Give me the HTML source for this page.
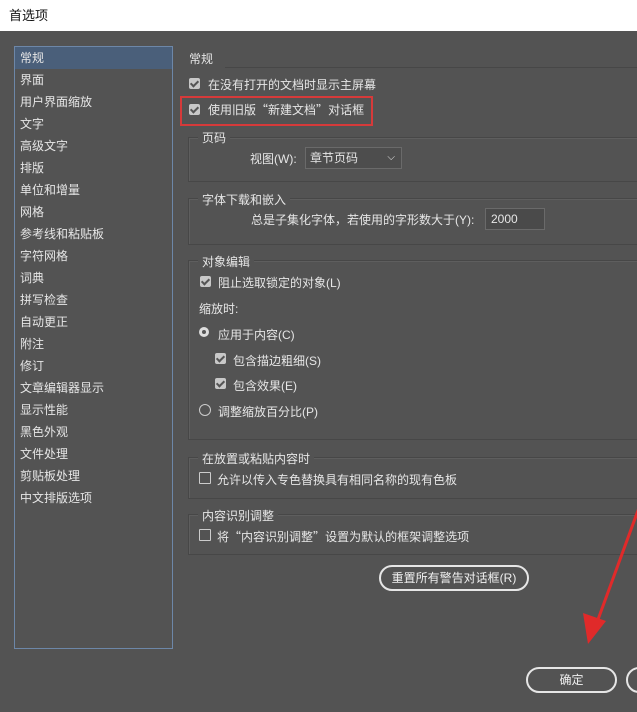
<!DOCTYPE html>
<html><head><meta charset="utf-8"><style>
body{margin:0;width:637px;height:712px;background:#535353;font-family:"Liberation Sans","Noto Sans CJK SC",sans-serif;font-size:12px;color:#e6e6e6;position:relative;overflow:hidden}
.a{position:absolute;white-space:nowrap}
.q{font-family:"Noto Sans CJK SC",sans-serif}
.title{position:absolute;left:0;top:0;width:637px;height:31px;background:#fff;color:#111;font-size:13px;line-height:31px;text-indent:9px}
.side{position:absolute;left:14px;top:46px;width:157px;height:601px;border:1px solid #6d87a8;background:#535353}
.side div{height:22px;line-height:22px;padding-left:5px;color:#e6e6e6}
.side .sel{background:#4a5f7a}
.cb{position:absolute;width:11px;height:11px;background:#c8c8c8;border-radius:2px}
.cb::after{content:"";position:absolute;left:3px;top:1px;width:3px;height:6px;border:solid #555;border-width:0 2px 2px 0;transform:rotate(45deg)}
.ecb{position:absolute;width:10px;height:10px;border:1px solid #ccc;border-radius:1px}
.grp{position:absolute;left:188px;width:460px;border:1px solid #474747;border-right:none;box-shadow:inset 1px 1px 0 #5e5e5e}
.gl{position:absolute;background:#535353;padding:0 4px;color:#e6e6e6}
.btn{position:absolute;border:2px solid #e6e6e6;border-radius:14px;text-align:center;color:#f0f0f0}
</style></head><body>
<div class="title">首选项</div>
<div class="side">
<div class="sel">常规</div><div>界面</div><div>用户界面缩放</div><div>文字</div><div>高级文字</div><div>排版</div><div>单位和增量</div><div>网格</div><div>参考线和粘贴板</div><div>字符网格</div><div>词典</div><div>拼写检查</div><div>自动更正</div><div>附注</div><div>修订</div><div>文章编辑器显示</div><div>显示性能</div><div>黑色外观</div><div>文件处理</div><div>剪贴板处理</div><div>中文排版选项</div>
</div>
<div class="a" style="left:189px;top:50px">常规</div>
<div class="a" style="left:225px;top:67px;width:412px;height:1px;background:#474747"></div>
<div class="cb" style="left:189px;top:78px"></div><div class="a" style="left:208px;top:76px">在没有打开的文档时显示主屏幕</div>
<div class="a" style="left:180px;top:96px;width:189px;height:26px;border:2px solid #d63a3a"></div>
<div class="cb" style="left:189px;top:104px"></div><div class="a" style="left:208px;top:101px">使用旧版<span class="q">“</span>新建文档<span class="q">”</span>对话框</div>

<div class="grp" style="top:137px;height:43px"></div><div class="gl" style="left:198px;top:129px">页码</div>
<div class="a" style="left:250px;top:150px">视图(W):</div>
<div class="a" style="left:305px;top:147px;width:95px;height:20px;border:1px solid #6a6a6a;background:#4d4d4d;line-height:20px;text-indent:4px">章节页码<span style="position:absolute;right:6px;font-size:10px">⌵</span></div>

<div class="grp" style="top:198px;height:45px"></div><div class="gl" style="left:198px;top:191px">字体下载和嵌入</div>
<div class="a" style="left:251px;top:211px">总是子集化字体，若使用的字形数大于(Y):</div>
<div class="a" style="left:485px;top:208px;width:58px;height:20px;border:1px solid #6a6a6a;background:#4a4a4a;line-height:20px;text-indent:5px">2000</div>

<div class="grp" style="top:260px;height:178px"></div><div class="gl" style="left:198px;top:253px">对象编辑</div>
<div class="cb" style="left:200px;top:276px"></div><div class="a" style="left:218px;top:274px">阻止选取锁定的对象(L)</div>
<div class="a" style="left:199px;top:300px">缩放时:</div>
<div class="a" style="left:199px;top:327px;width:10px;height:10px;border-radius:50%;background:#ddd"><div style="position:absolute;left:3px;top:3px;width:4px;height:4px;border-radius:50%;background:#555"></div></div>
<div class="a" style="left:218px;top:326px">应用于内容(C)</div>
<div class="cb" style="left:215px;top:353px"></div><div class="a" style="left:233px;top:352px">包含描边粗细(S)</div>
<div class="cb" style="left:215px;top:378px"></div><div class="a" style="left:233px;top:377px">包含效果(E)</div>
<div class="a" style="left:199px;top:404px;width:10px;height:10px;border-radius:50%;border:1px solid #ccc"></div>
<div class="a" style="left:218px;top:403px">调整缩放百分比(P)</div>

<div class="grp" style="top:457px;height:40px"></div><div class="gl" style="left:198px;top:450px">在放置或粘贴内容时</div>
<div class="ecb" style="left:199px;top:472px"></div><div class="a" style="left:217px;top:471px">允许以传入专色替换具有相同名称的现有色板</div>

<div class="grp" style="top:514px;height:39px"></div><div class="gl" style="left:198px;top:507px">内容识别调整</div>
<div class="ecb" style="left:199px;top:529px"></div><div class="a" style="left:217px;top:528px">将<span class="q">“</span>内容识别调整<span class="q">”</span>设置为默认的框架调整选项</div>

<div class="btn" style="left:379px;top:565px;width:146px;height:22px;line-height:22px">重置所有警告对话框(R)</div>
<div class="btn" style="left:526px;top:667px;width:87px;height:22px;line-height:22px">确定</div>
<div class="btn" style="left:626px;top:667px;width:40px;height:22px"></div>
<svg class="a" style="left:0;top:0" width="637" height="712"><line x1="640" y1="505" x2="596" y2="625" stroke="#e02a2a" stroke-width="3"/><polygon points="588,644 583,613 606,621" fill="#e02a2a"/></svg>
</body></html>
